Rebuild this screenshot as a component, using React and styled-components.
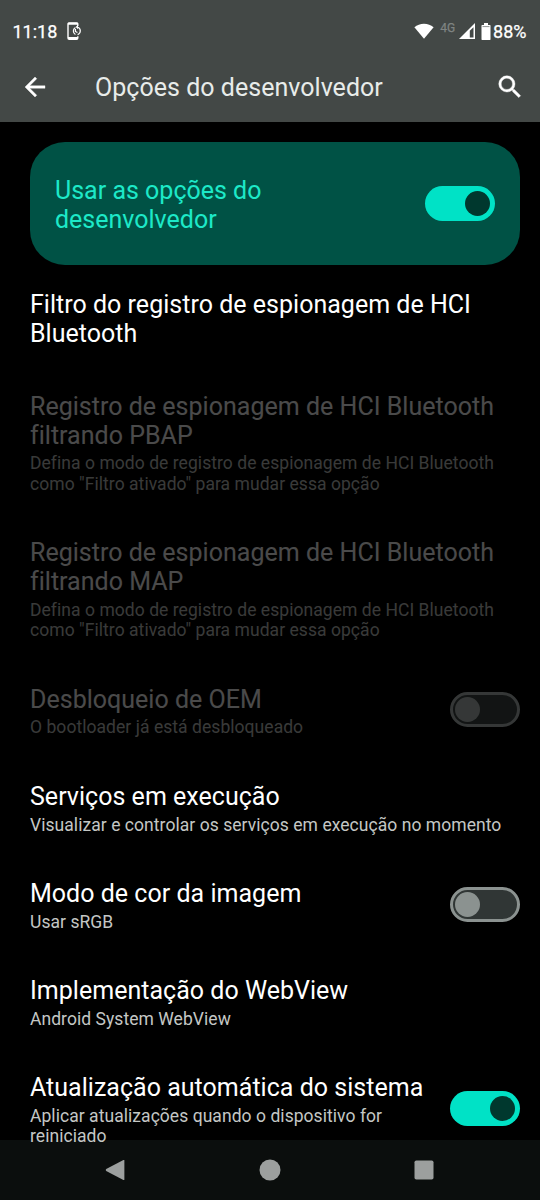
import styled, { createGlobalStyle } from 'styled-components';

const settings = [
  { title: 'Filtro do registro de espionagem de HCI Bluetooth' },
  {
    title: 'Registro de espionagem de HCI Bluetooth filtrando PBAP',
    summary: 'Defina o modo de registro de espionagem de HCI Bluetooth como "Filtro ativado" para mudar essa opção',
    disabled: true,
  },
  {
    title: 'Registro de espionagem de HCI Bluetooth filtrando MAP',
    summary: 'Defina o modo de registro de espionagem de HCI Bluetooth como "Filtro ativado" para mudar essa opção',
    disabled: true,
  },
  { title: 'Desbloqueio de OEM', summary: 'O bootloader já está desbloqueado', disabled: true, checked: false },
  { title: 'Serviços em execução', summary: 'Visualizar e controlar os serviços em execução no momento' },
  { title: 'Modo de cor da imagem', summary: 'Usar sRGB', checked: false },
  { title: 'Implementação do WebView', summary: 'Android System WebView' },
  {
    title: 'Atualização automática do sistema',
    summary: 'Aplicar atualizações quando o dispositivo for reiniciado',
    checked: true,
  },
];

const Switch = ({ on, disabled }) => (
  <Track type='button' role='switch' aria-checked={on} disabled={disabled} $on={on}>
    <Thumb $on={on} />
  </Track>
);

const App = () => (
  <>
    <GlobalStyle />
    <Screen>
      <Header>
        <StatusBar>
          <Clock>11:18</Clock>
          <svg width='15' height='19' viewBox='0 0 15 19' fill='none' stroke='#fff'>
            <path d='M10.8 4V2.2Q10.8 1 9.6 1H2.2Q1 1 1 2.2V16Q1 17.2 2.2 17.2H9.6Q10.8 17.2 10.8 16V14.2' strokeWidth='1.4' />
            <path d='M1 1.8H11M1 16H11' strokeWidth='2' />
            <path d='M8.4 5.4A4 4 0 0 0 8.4 12.4M10.6 12.6A4 4 0 0 0 11 5.2M8.4 7V9.4L10.4 10.6' strokeWidth='1.2' />
            <path d='M8.6 5L11 2.8V7.2Z' fill='#fff' stroke='none' />
          </svg>
          <StatusIcons>
            <svg width='20' height='16' viewBox='0 0 20 16' fill='#fff'>
              <path d='M.4 4.2Q4.5.7 10 .7T19.6 4.2L10 15.7Z' />
            </svg>
            <Network>4G</Network>
            <svg width='16' height='16' viewBox='0 0 16 16' fill='#fff'>
              <path fillRule='evenodd' d='M16 0V16H0ZM14.5 4.2L10.8 7.8V14.5H14.5Z' />
            </svg>
            <Battery width='10' height='17' viewBox='0 0 10 17' fill='#fff'>
              <path d='M3 0H7V2H9Q9.5 2 9.5 2.7V16.3Q9.5 17 9 17H1Q.5 17 .5 16.3V2.7Q.5 2 1 2H3Z' />
              <path d='M1.5 3.6H8.5' stroke='#747a78' strokeWidth='.8' />
            </Battery>
            <span>88%</span>
          </StatusIcons>
        </StatusBar>
        <Toolbar>
          <IconButton type='button' aria-label='Voltar'>
            <svg width='30' height='30' viewBox='0 0 24 24' fill='#fff' stroke='#fff' strokeWidth='.3'>
              <path d='M20 11H7.83l5.59-5.59L12 4l-8 8 8 8 1.41-1.41L7.83 13H20v-2z' />
            </svg>
          </IconButton>
          <PageTitle>Opções do desenvolvedor</PageTitle>
          <IconButton type='button' aria-label='Pesquisar'>
            <svg width='30' height='30' viewBox='0 0 24 24' fill='#fff' stroke='#fff' strokeWidth='.3'>
              <path d='M15.5 14h-.79l-.28-.27A6.47 6.47 0 0 0 16 9.5 6.5 6.5 0 1 0 9.5 16c1.61 0 3.09-.59 4.23-1.57l.27.28v.79l5 4.99L20.49 19l-4.99-5zm-6 0C7.01 14 5 11.99 5 9.5S7.01 5 9.5 5 14 7.01 14 9.5 11.99 14 9.5 14z' />
            </svg>
          </IconButton>
        </Toolbar>
      </Header>

      <Content>
        <MainSwitch>
          <MainLabel>Usar as opções do desenvolvedor</MainLabel>
          <Switch on />
        </MainSwitch>
        {settings.map(({ title, summary, disabled, checked }) => (
          <Row key={title}>
            <RowText $disabled={disabled}>
              <Title>{title}</Title>
              {summary && <Summary>{summary}</Summary>}
            </RowText>
            {checked !== undefined && <Switch on={checked} disabled={disabled} />}
          </Row>
        ))}
      </Content>

      <NavBar>
        <svg width='24' height='24' viewBox='0 0 24 24'>
          <path d='M20.4 2.6V21.4Q20.4 22.4 19.4 22L2.2 13Q1.2 12 2.2 11L19.4 2Q20.4 1.6 20.4 2.6Z' />
        </svg>
        <svg width='24' height='24' viewBox='0 0 24 24'>
          <circle cx='12' cy='12' r='10.5' />
        </svg>
        <svg width='24' height='24' viewBox='0 0 24 24'>
          <rect x='2.5' y='2.5' width='19' height='19' rx='1.8' />
        </svg>
      </NavBar>
    </Screen>
  </>
);

export default App;

const GlobalStyle = createGlobalStyle`
  * { box-sizing: border-box; }

  body {
    margin: 0;
    background: #000;
    font-family: Roboto, 'Noto Sans', sans-serif;
  }

  svg { display: block; flex-shrink: 0; }
`;

const Screen = styled.div`
  width: 540px;
  height: 1200px;
  display: flex;
  flex-direction: column;
  overflow: hidden;
  background: #000;
  color: #fff;
`;

const Header = styled.header`
  height: 122px;
  flex-shrink: 0;
  background: #434846;
`;

const StatusBar = styled.div`
  height: 52px;
  padding: 10px 13.5px 0 12.5px;
  display: flex;
  align-items: center;
  font-size: 18px;
  -webkit-text-stroke: 0.25px #fff;
`;

const Clock = styled.span`
  width: 54.5px;
`;

const StatusIcons = styled.div`
  margin-left: auto;
  display: flex;
  align-items: center;
`;

const Network = styled.span`
  margin: -7px 4px 0 6px;
  font-size: 12px;
  color: #7f8482;
  -webkit-text-stroke: 0.25px #7f8482;
`;

const Battery = styled.svg`
  margin: 0 2px 0 6px;
`;

const Toolbar = styled.div`
  height: 70px;
  padding: 0 15px 0 20px;
  display: flex;
  align-items: center;
`;

const IconButton = styled.button`
  padding: 0;
  border: 0;
  background: none;
`;

const PageTitle = styled.h1`
  flex: 1;
  margin: 0 0 0 45px;
  font-size: 25px;
  font-weight: 400;
  letter-spacing: 0.03px;
  color: #e8ecea;
`;

const Content = styled.main`
  flex: 1;
  min-height: 0;
  margin-bottom: -6px;
  padding-top: 20px;
  overflow: hidden;
  z-index: 1;
`;

const MainSwitch = styled.div`
  height: 123px;
  margin: 0 20px 2.6px 30px;
  padding: 3px 25px 0;
  display: flex;
  align-items: center;
  justify-content: space-between;
  border-radius: 35px;
  background: #005245;
`;

const MainLabel = styled.div`
  width: 250px;
  font-size: 25px;
  line-height: 29px;
  color: #1de9c8;
`;

const Row = styled.div`
  padding: 22.1px 20px 22.1px 30px;
  display: flex;
  align-items: center;
  justify-content: space-between;
`;

const RowText = styled.div`
  max-width: 490px;
  opacity: ${({ $disabled }) => ($disabled ? 0.29 : 1)};
`;

const Title = styled.div`
  font-size: 25px;
  line-height: 29px;
  letter-spacing: 0.02px;
  color: #fff;
`;

const Summary = styled.div`
  margin-top: 3.4px;
  font-size: 17.5px;
  line-height: 20.5px;
  letter-spacing: 0.05px;
  color: #c4c7c5;
`;

const Track = styled.button`
  width: 70px;
  height: 35px;
  flex-shrink: 0;
  margin: 0 0 3px;
  padding: 0 ${({ $on }) => ($on ? '5px' : '2px')};
  display: flex;
  align-items: center;
  justify-content: ${({ $on }) => ($on ? 'flex-end' : 'flex-start')};
  border: ${({ $on }) => ($on ? '0' : '3px solid #8b9290')};
  border-radius: 18px;
  background: ${({ $on }) => ($on ? '#00e2c6' : '#303635')};

  &:disabled { opacity: 0.38; }
`;

const Thumb = styled.span`
  width: 25px;
  height: 25px;
  border-radius: 50%;
  background: ${({ $on }) => ($on ? '#00382e' : '#8b9290')};
`;

const NavBar = styled.nav`
  height: 60px;
  flex-shrink: 0;
  padding: 0 104px;
  display: flex;
  align-items: center;
  justify-content: space-between;
  background: #0b0e0d;
  fill: #9c9f9e;
`;
